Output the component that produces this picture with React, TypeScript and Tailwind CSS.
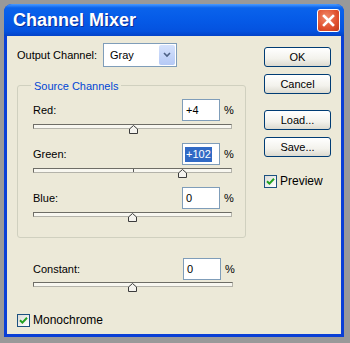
import React from "react";

const FONT = { fontFamily: '"Liberation Sans", Arial, sans-serif' };

function Thumb() {
  return (
    <svg width="9" height="9" viewBox="0 0 9 9" className="block">
      <path d="M4.5 0.5 L8.5 4 L8.5 8.5 L0.5 8.5 L0.5 4 Z" fill="#f4f3ee" stroke="#3c3c3c" strokeWidth="1" />
    </svg>
  );
}

function Slider({ value, tick = false }: { value: number; tick?: boolean }) {
  // range -200 .. +200 over the track
  const pct = 50 + (value / 200) * 50;
  return (
    <div className="relative h-[5px] border border-[#6e6d66] border-b-[#b4b3aa] border-r-[#b4b3aa] bg-[#f8f7f0]">
      {tick && <div className="absolute left-1/2 top-0 h-full w-px bg-[#5a5a5a]" />}
      <div className="absolute top-[0px]" style={{ left: `calc(${pct}% - 5px)` }}>
        <Thumb />
      </div>
    </div>
  );
}

function NumField({ value, selected = false }: { value: string; selected?: boolean }) {
  return (
    <div className="flex h-[22px] w-[38px] items-center border border-[#7f9db9] bg-white pl-[2px]">
      {selected ? (
        <span className="bg-[#316ac5] px-[1px] leading-[15px] text-white">{value}</span>
      ) : (
        <span className="pl-[1px] leading-[15px] text-black">{value}</span>
      )}
    </div>
  );
}

function ChannelRow({ label, value, num, selected, tick }: { label: string; value: string; num: number; selected?: boolean; tick?: boolean }) {
  return (
    <div>
      <div className="flex h-[22px] items-center">
        <span className="flex-1">{label}</span>
        <NumField value={value} selected={selected} />
        <span className="ml-[4px] w-[8px]">%</span>
      </div>
      <div className="mt-[3px]">
        <Slider value={num} tick={tick} />
      </div>
    </div>
  );
}

function Check({ label }: { label: string }) {
  return (
    <div className="flex items-center gap-[3px]">
      <div className="flex h-[13px] w-[13px] items-center justify-center border border-[#1c5180] bg-[linear-gradient(135deg,#dcdcd7,#ffffff)]">
        <svg width="9" height="9" viewBox="0 0 9 9">
          <path d="M1 4.2 L3.4 6.6 L8 1.8" fill="none" stroke="#21a121" strokeWidth="2" />
        </svg>
      </div>
      <span className="text-[12px] text-black">{label}</span>
    </div>
  );
}

function XPButton({ label }: { label: string }) {
  return (
    <div className="flex h-[20px] w-[67px] items-center justify-center rounded-[3px] border border-[#003c74] bg-[linear-gradient(180deg,#ffffff_0%,#f3f2ec_60%,#dcdad0_100%)] text-black">
      {label}
    </div>
  );
}

export default function App() {
  return (
    <div className="h-[343px] w-[350px] overflow-hidden bg-[#999999] pl-[4px] pt-[4px] text-[11px] text-black" style={FONT}>
      <div className="flex h-[333px] w-[340px] flex-col overflow-hidden rounded-t-[8px] bg-[#0a3fd6]">
        {/* title bar */}
        <div className="flex h-[32px] items-center justify-between bg-[linear-gradient(180deg,#4a9bff_0%,#0a63ec_12%,#0559e6_55%,#0452df_85%,#0343c8_100%)] pl-[9px] pr-[4px]">
          <span className="text-[18px] font-bold text-white [text-shadow:1px_1px_0_#0b2f9a]">Channel Mixer</span>
          <div className="flex h-[23px] w-[23px] items-center justify-center rounded-[3px] border border-white bg-[radial-gradient(circle_at_40%_35%,#f08a6a,#e0502e_60%,#c03a1a)]">
            <svg width="13" height="13" viewBox="0 0 13 13">
              <path d="M2 2 L11 11 M11 2 L2 11" stroke="#ffffff" strokeWidth="2.6" strokeLinecap="square" />
            </svg>
          </div>
        </div>

        {/* client area */}
        <div className="mx-[3px] mb-[3px] flex flex-1 bg-[#ece9d8]">
          <div className="w-[239px] pl-[10px] pt-[7px]">
            <div className="flex h-[24px] items-center">
              <span className="w-[86px]">Output Channel:</span>
              <div className="flex h-[24px] w-[74px] items-center border border-[#7f9db9] bg-white pl-[6px] pr-[1px]">
                <span className="flex-1">Gray</span>
                <div className="flex h-[20px] w-[16px] items-center justify-center rounded-[2px] bg-[linear-gradient(180deg,#d5e2fc,#b5c9f5)]">
                  <svg width="8" height="6" viewBox="0 0 8 6">
                    <path d="M1 1 L4 4 L7 1" fill="none" stroke="#4d6185" strokeWidth="1.6" />
                  </svg>
                </div>
              </div>
            </div>

            <div className="relative mt-[18px] rounded-[3px] border border-[#d0d0bf] pb-[20px] pl-[15px] pr-[13px] pt-[13px]">
              <span className="absolute left-[13px] top-[-8px] bg-[#ece9d8] px-[3px] text-[#0046d5]">Source Channels</span>
              <ChannelRow label="Red:" value="+4" num={4} />
              <div className="mt-[14px]">
                <ChannelRow label="Green:" value="+102" num={102} selected tick />
              </div>
              <div className="mt-[14px]">
                <ChannelRow label="Blue:" value="0" num={0} />
              </div>
            </div>

            <div className="mt-[20px] pl-[16px] pr-[13px]">
              <div className="flex h-[22px] items-center">
                <span className="flex-1">Constant:</span>
                <NumField value="0" />
                <span className="ml-[4px] w-[8px]">%</span>
              </div>
              <div className="mt-[2px]">
                <Slider value={0} />
              </div>
            </div>

            <div className="mt-[24px]">
              <Check label="Monochrome" />
            </div>
          </div>

          <div className="flex flex-col pl-[18px] pt-[11px]">
            <XPButton label="OK" />
            <div className="mt-[7px]">
              <XPButton label="Cancel" />
            </div>
            <div className="mt-[16px]">
              <XPButton label="Load..." />
            </div>
            <div className="mt-[7px]">
              <XPButton label="Save..." />
            </div>
            <div className="mt-[15px]">
              <Check label="Preview" />
            </div>
          </div>
        </div>
      </div>
    </div>
  );
}
